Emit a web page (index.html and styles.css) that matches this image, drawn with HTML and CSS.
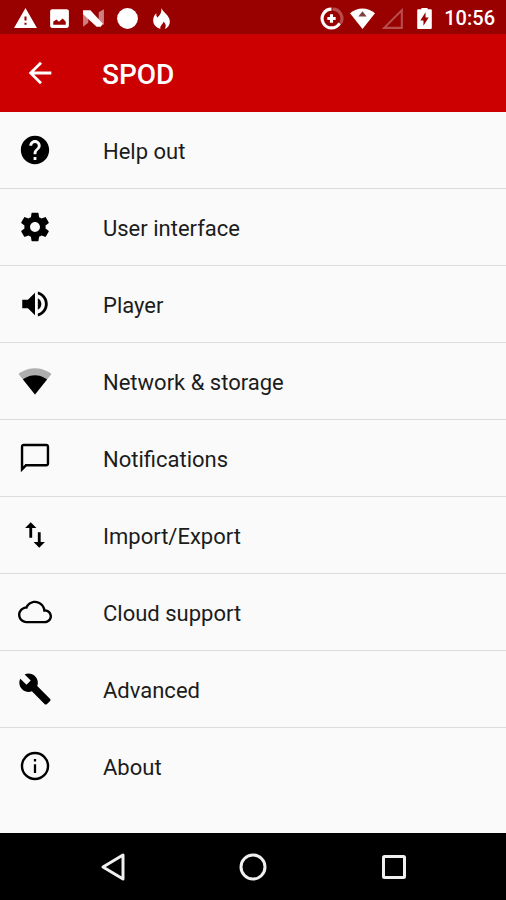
FILE: index.html
```html
<!DOCTYPE html>
<html lang="en">
<head>
<meta charset="utf-8">
<meta name="viewport" content="width=device-width, initial-scale=1">
<title>SPOD</title>
<link rel="stylesheet" href="styles.css">
</head>
<body>
<div class="status-bar">
  <div class="status-group">
    <svg class="status-icon" viewBox="0 0 24 24" aria-hidden="true"><path d="M1 21h22L12 2 1 21zm12-3h-2v-2h2v2zm0-4h-2v-4h2v4z"/></svg>
    <svg class="status-icon" viewBox="0 0 24 24" aria-hidden="true"><path d="M21 19V5c0-1.100-.9-2-2-2H5c-1.100 0-2 .9-2 2v14c0 1.100.9 2 2 2h14c1.100 0 2-.9 2-2zM6 18v-3l3-2 2.500 2 3.500-3 3 3v3H6z"/></svg>
    <svg class="status-icon" viewBox="0 0 24 24" aria-hidden="true"><path class="faded" d="M2 5h5v11l-5 4zM22 3l-5 3v11l5 1z"/><path d="M2 4h7l12 13-2 3h-4L2 8z"/></svg>
    <svg class="status-icon" viewBox="0 0 24 24" aria-hidden="true"><circle cx="12" cy="12" r="10"/></svg>
    <svg class="status-icon" viewBox="0 0 24 24" aria-hidden="true"><path d="M12 2c1 4 8 7 8 13 0 3-2 6-5 7 2-3 1-5-1-7-1 3-4 4-3 7-4-1-7-4-7-8 0-3 1-5 3-7 0 2 0 3 1 4 3-2 4-5 4-9z"/></svg>
  </div>
  <div class="status-group status-right">
    <svg class="status-icon" viewBox="0 0 24 24" aria-hidden="true"><path class="dim-line" d="M13 3a9 9 0 0 1 7.800 13.500"/><path class="heavy-line" d="M12 3a9 9 0 1 0 7.800 13.500M12 8v8M8 12h8"/></svg>
    <svg class="status-icon" viewBox="0 0 24 24" aria-hidden="true"><path d="M12 22L24 7C17 1 7 1 0 7z"/><path class="cutout" d="M12 5l4 5H8z"/></svg>
    <svg class="status-icon" viewBox="0 0 24 24" aria-hidden="true"><path class="dim-line thin" d="M3 21L20 4v17z"/></svg>
    <svg class="status-icon" viewBox="0 0 24 24" aria-hidden="true"><path d="M18 3h-3V2H9v1H6a1 1 0 0 0-1 1v17a1 1 0 0 0 1 1h12a1 1 0 0 0 1-1V4a1 1 0 0 0-1-1zm-7 16v-5H8l5-8v5h3z"/></svg>
    <span class="clock">10:56</span>
  </div>
</div>
<header class="app-bar">
  <button class="back" type="button" aria-label="Back">
    <svg class="back-icon" viewBox="0 0 24 24" aria-hidden="true"><path d="M20 11H7.830l5.590-5.590L12 4l-8 8 8 8 1.410-1.410L7.830 13H20v-2z"/></svg>
  </button>
  <h1 class="title">SPOD</h1>
</header>
<main class="content">
  <ul class="menu">
    <li class="item"><a class="link" href="#help"><svg class="icon" viewBox="0 0 24 24" aria-hidden="true"><path d="M12 2C6.480 2 2 6.480 2 12s4.480 10 10 10 10-4.480 10-10S17.520 2 12 2zm1 17h-2v-2h2v2zm2.070-7.750l-.9.920C13.450 12.900 13 13.500 13 15h-2v-.5c0-1.100.45-2.100 1.170-2.830l1.240-1.260c.37-.36.59-.86.59-1.410 0-1.100-.9-2-2-2s-2 .9-2 2H8c0-2.210 1.790-4 4-4s4 1.790 4 4c0 .88-.36 1.680-.93 2.250z"/></svg><span class="label">Help out</span></a></li>
    <li class="item"><a class="link" href="#ui"><svg class="icon" viewBox="0 0 24 24" aria-hidden="true"><path d="M19.430 12.980c.04-.32.07-.64.07-.98s-.03-.66-.07-.98l2.110-1.650c.19-.15.24-.42.12-.64l-2-3.460c-.12-.22-.39-.3-.61-.22l-2.490 1c-.52-.4-1.080-.73-1.690-.98l-.38-2.650C14.460 2.180 14.250 2 14 2h-4c-.25 0-.46.18-.49.42l-.38 2.650c-.61.25-1.170.59-1.690.98l-2.490-1c-.23-.09-.49 0-.61.22l-2 3.460c-.13.22-.07.49.12.64l2.110 1.650c-.04.32-.07.65-.07.98s.03.66.07.98l-2.110 1.650c-.19.15-.24.42-.12.64l2 3.460c.12.22.39.3.61.22l2.490-1c.52.4 1.080.73 1.690.98l.38 2.650c.03.24.24.42.49.42h4c.25 0 .46-.18.49-.42l.38-2.650c.61-.25 1.170-.59 1.690-.98l2.490 1c.23.09.49 0 .61-.22l2-3.460c.12-.22.07-.49-.12-.64l-2.110-1.650zM12 15.500c-1.930 0-3.500-1.570-3.500-3.500s1.570-3.500 3.500-3.500 3.500 1.570 3.500 3.500-1.570 3.500-3.500 3.500z"/></svg><span class="label">User interface</span></a></li>
    <li class="item"><a class="link" href="#player"><svg class="icon" viewBox="0 0 24 24" aria-hidden="true"><path d="M3 9v6h4l5 5V4L7 9H3zm13.500 3c0-1.770-1.020-3.290-2.500-4.030v8.050c1.480-.73 2.500-2.250 2.500-4.020zM14 3.230v2.060c2.890.86 5 3.540 5 6.710s-2.110 5.850-5 6.710v2.060c4.010-.91 7-4.490 7-8.770s-2.990-7.860-7-8.770z"/></svg><span class="label">Player</span></a></li>
    <li class="item"><a class="link" href="#network"><svg class="icon" viewBox="0 0 24 24" aria-hidden="true"><path class="wifi-back" d="M12.010 21.490L23.640 7c-.45-.34-4.930-4-11.640-4C5.280 3 .81 6.660.36 7l11.630 14.490.01.010.01-.010z"/><path d="M3.530 10.950l8.460 10.540.01.010.01-.010 8.460-10.540C20.040 10.620 16.810 8 12 8c-4.810 0-8.040 2.620-8.470 2.950z"/></svg><span class="label">Network &amp; storage</span></a></li>
    <li class="item"><a class="link" href="#notifications"><svg class="icon" viewBox="0 0 24 24" aria-hidden="true"><path d="M20 2H4c-1.100 0-2 .9-2 2v18l4-4h14c1.100 0 2-.9 2-2V4c0-1.100-.9-2-2-2zm.3 14.300H5.300L3.700 17.900V3.700h16.600v12.600z"/></svg><span class="label">Notifications</span></a></li>
    <li class="item"><a class="link" href="#import-export"><svg class="icon" viewBox="0 0 24 24" aria-hidden="true"><path d="M9 3L5 6.990h3V14h2V6.990h3L9 3zm7 14.010V10h-2v7.010h-3L15 21l4-3.990h-3z"/></svg><span class="label">Import/Export</span></a></li>
    <li class="item"><a class="link" href="#cloud"><svg class="icon" viewBox="0 0 24 24" aria-hidden="true"><path d="M19.350 10.040C18.670 6.590 15.640 4 12 4 9.110 4 6.600 5.640 5.350 8.040 2.340 8.360 0 10.910 0 14c0 3.310 2.690 6 6 6h13c2.760 0 5-2.240 5-5 0-2.640-2.050-4.780-4.650-4.960zM19 18.300H6c-2.400 0-4.300-1.900-4.300-4.300s1.900-4.300 4.300-4.300h.6C7.200 7.400 9.400 5.700 12 5.700c3.200 0 5.800 2.600 5.800 5.800v.3H19c1.800 0 3.300 1.400 3.300 3.200s-1.500 3.300-3.300 3.300z"/></svg><span class="label">Cloud support</span></a></li>
    <li class="item"><a class="link" href="#advanced"><svg class="icon" viewBox="0 0 24 24" aria-hidden="true"><path d="M22.700 19l-9.100-9.100c.9-2.300.4-5-1.500-6.900-2-2-5-2.400-7.400-1.300L9 6 6 9 1.600 4.700C.4 7.100.9 10.100 2.900 12.100c1.900 1.900 4.600 2.400 6.900 1.500l9.100 9.100c.4.4 1 .4 1.400 0l2.300-2.300c.5-.4.5-1.100.1-1.400z"/></svg><span class="label">Advanced</span></a></li>
    <li class="item"><a class="link" href="#about"><svg class="icon" viewBox="0 0 24 24" aria-hidden="true"><circle class="ring" cx="12" cy="12" r="9.200"/><path d="M11.200 7h1.600v1.800h-1.600zM11.200 10.800h1.600V17h-1.600z"/></svg><span class="label">About</span></a></li>
  </ul>
</main>
<nav class="nav-bar" aria-label="System">
  <button class="nav-button" type="button" aria-label="Back"><svg class="nav-icon" viewBox="0 0 32 32" aria-hidden="true"><path d="M7 16L27 4v24z"/></svg></button>
  <button class="nav-button" type="button" aria-label="Home"><svg class="nav-icon" viewBox="0 0 32 32" aria-hidden="true"><circle cx="16" cy="16" r="12"/></svg></button>
  <button class="nav-button" type="button" aria-label="Recent apps"><svg class="nav-icon" viewBox="0 0 32 32" aria-hidden="true"><rect x="5.500" y="5.500" width="21" height="21" rx="1"/></svg></button>
</nav>
</body>
</html>
```
FILE: styles.css
```css
* {
  box-sizing: border-box;
}

body {
  margin: 0;
  min-height: 100vh;
  display: flex;
  flex-direction: column;
  background: #fafafa;
  color: #1c1c1c;
  font-family: Roboto, "Liberation Sans", sans-serif;
}

button {
  border: 0;
  padding: 0;
  background: none;
  color: inherit;
}

svg {
  display: block;
  flex: none;
  fill: currentColor;
}

.status-bar {
  display: flex;
  justify-content: space-between;
  align-items: center;
  height: 34px;
  padding: 2px 11px 0 13px;
  background: #990000;
  color: #fff;
}

.status-group {
  display: flex;
  align-items: center;
  gap: 9px;
}

.status-right {
  gap: 6px;
}

.status-icon {
  width: 25px;
  height: 25px;
}

.faded {
  opacity: 0.5;
}

.heavy-line,
.dim-line {
  fill: none;
  stroke: currentColor;
  stroke-width: 3;
}

.dim-line {
  opacity: 0.3;
}

.thin {
  stroke-width: 2;
}

.cutout {
  fill: #804040;
}

.clock {
  margin-left: 1px;
  font-size: 20px;
  font-weight: 500;
  line-height: 24px;
}

.app-bar {
  display: flex;
  align-items: center;
  height: 78px;
  padding-left: 23px;
  background: #cc0000;
  color: #fff;
}

.back {
  width: 79px;
}

.back-icon {
  width: 34px;
  height: 34px;
}

.title {
  margin: 0;
  padding-top: 4px;
  font-size: 28px;
  font-weight: 500;
  line-height: 32px;
}

.content {
  flex: 1;
}

.menu {
  margin: 0;
  padding: 0;
  list-style: none;
}

.item + .item {
  border-top: 1px solid #dcdcdc;
}

.link {
  display: flex;
  align-items: center;
  gap: 51px;
  height: 76px;
  padding-left: 18px;
  color: inherit;
  font-size: 22px;
  line-height: 28px;
  text-decoration: none;
}

.label {
  padding-top: 4px;
}

.icon {
  width: 34px;
  height: 34px;
  color: #000;
}

.wifi-back {
  opacity: 0.3;
}

.ring {
  fill: none;
  stroke: currentColor;
  stroke-width: 1.7;
}

.nav-bar {
  display: flex;
  height: 67px;
  padding: 0 42px;
  background: #000;
  color: #f0f0f0;
}

.nav-button {
  flex: 1;
  display: flex;
  align-items: center;
  justify-content: center;
}

.nav-icon {
  width: 32px;
  height: 32px;
  fill: none;
  stroke: currentColor;
  stroke-width: 3;
  stroke-linejoin: round;
}
```
